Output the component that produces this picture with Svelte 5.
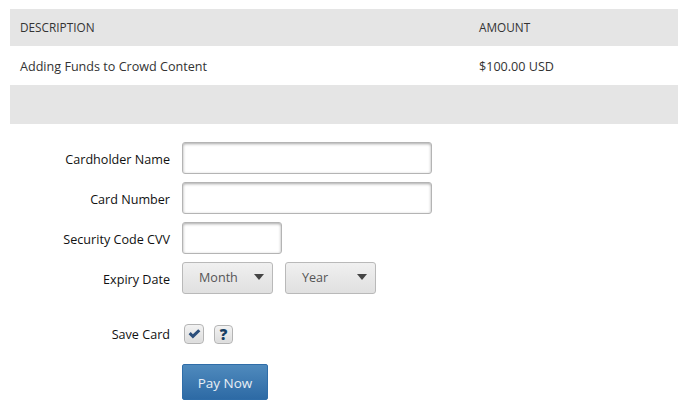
<script lang="ts">
  let saveCard = $state(true);
</script>

<div class="page">
  <table class="summary">
    <thead>
      <tr>
        <th class="desc">DESCRIPTION</th>
        <th>AMOUNT</th>
      </tr>
    </thead>
    <tbody>
      <tr>
        <td>Adding Funds to Crowd Content</td>
        <td>$100.00 USD</td>
      </tr>
    </tbody>
    <tfoot>
      <tr>
        <td colspan="2"></td>
      </tr>
    </tfoot>
  </table>

  <form class="pay-form">
    <div class="row">
      <label for="name">Cardholder Name</label>
      <input id="name" type="text" />
    </div>
    <div class="row">
      <label for="number">Card Number</label>
      <input id="number" type="text" />
    </div>
    <div class="row">
      <label for="cvv">Security Code CVV</label>
      <input id="cvv" class="short" type="text" />
    </div>
    <div class="row">
      <span class="label">Expiry Date</span>
      <div class="selects">
        <button type="button" class="select">
          <span>Month</span><i class="caret"></i>
        </button>
        <button type="button" class="select">
          <span>Year</span><i class="caret"></i>
        </button>
      </div>
    </div>
    <div class="row save">
      <span class="label">Save Card</span>
      <div class="toggles">
        <button type="button" class="mini check" aria-label="Save card" onclick={() => (saveCard = !saveCard)}>
          {#if saveCard}
            <svg width="13" height="10" viewBox="0 0 13 10">
              <path d="M0.6 5.2 L2.7 3.1 L4.9 5.2 L10.2 0.2 L12.4 2.3 L4.9 9.6 Z" fill="#2c4f7c" />
            </svg>
          {/if}
        </button>
        <button type="button" class="mini help">?</button>
      </div>
    </div>
    <div class="row submit">
      <button type="button" class="pay">Pay Now</button>
    </div>
  </form>
</div>

<style>
  :global(body) {
    background: #fff;
  }

  .page {
    padding: 9px 13px 0 10px;
    font-family: "Open Sans", sans-serif;
    font-size: 12.6px;
    color: #333;
  }

  .summary {
    width: 100%;
    table-layout: fixed;
    border-collapse: collapse;
  }

  th {
    box-sizing: border-box;
    background: #e5e5e5;
    height: 37px;
    padding: 0 10px 2px;
    text-align: left;
    font-weight: 400;
    font-size: 11.8px;
  }

  th.desc {
    width: 459px;
  }

  td {
    height: 39px;
    padding: 2px 10px 0;
    box-sizing: border-box;
  }

  tfoot td {
    background: #e5e5e5;
  }

  .pay-form {
    display: flex;
    flex-direction: column;
    gap: 8px;
    margin-top: 18px;
  }

  .row {
    display: flex;
    align-items: center;
    gap: 12px;
  }

  label,
  .label {
    width: 160px;
    text-align: right;
    color: #111;
    padding-top: 2px;
  }

  .save .label {
    padding-top: 0;
  }

  input {
    box-sizing: border-box;
    width: 250px;
    height: 32px;
    border: 1px solid #b4b4b4;
    border-radius: 3px;
    background: #fff;
    box-shadow: inset 0 1px 3px rgba(0, 0, 0, 0.35);
    outline: none;
  }

  input.short {
    width: 100px;
  }

  .selects {
    display: flex;
    gap: 12px;
  }

  .select {
    box-sizing: border-box;
    display: flex;
    align-items: center;
    justify-content: space-between;
    width: 91px;
    height: 32px;
    border: 1px solid #b9b9b9;
    border-radius: 3px;
    background: linear-gradient(#f0f0f0, #e0e0e0);
    padding: 0 8px 2px 16px;
    font: inherit;
    color: #555;
  }

  .caret {
    width: 0;
    height: 0;
    border-left: 5px solid transparent;
    border-right: 5px solid transparent;
    border-top: 6px solid #444;
  }

  .save {
    margin-top: 22px;
  }

  .toggles {
    display: flex;
    align-items: flex-end;
    gap: 10px;
    padding-left: 2px;
  }

  .mini {
    box-sizing: border-box;
    display: flex;
    align-items: center;
    justify-content: center;
    padding: 0;
    border: 1px solid #b4b4b4;
    border-radius: 4px;
    background: linear-gradient(#f2f2f2, #dcdcdc);
    box-shadow: inset 0 0 1px #fff;
  }

  .check {
    width: 20px;
    height: 20px;
  }

  .help {
    width: 19px;
    height: 19px;
    font-family: "Open Sans", sans-serif;
    font-weight: 800;
    font-size: 15px;
    line-height: 1;
    color: #173f63;
  }

  .submit {
    margin-top: 12px;
    padding-left: 172px;
  }

  .pay {
    width: 86px;
    height: 36px;
    padding: 2px 0 0;
    border: 1px solid #2f6da8;
    border-radius: 2px;
    background: linear-gradient(#4f8abd, #2d6aa5);
    color: #e8eef5;
    font: inherit;
    font-size: 13.5px;
  }
</style>
